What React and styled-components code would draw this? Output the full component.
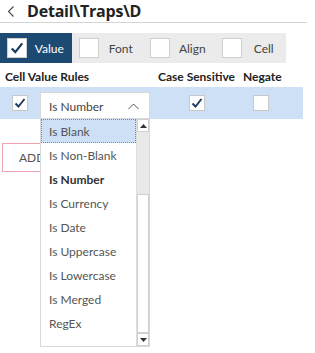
import React from 'react';
import styled, { createGlobalStyle } from 'styled-components';

const GlobalStyle = createGlobalStyle`
  html, body {
    margin: 0;
    padding: 0;
    background: #fff;
    font-family: 'Lato', 'Open Sans', sans-serif;
  }
`;

const tabs = [
  { label: 'Value', checked: true, active: true },
  { label: 'Font' },
  { label: 'Align' },
  { label: 'Cell' },
];

const options = [
  'Is Blank',
  'Is Non-Blank',
  'Is Number',
  'Is Currency',
  'Is Date',
  'Is Uppercase',
  'Is Lowercase',
  'Is Merged',
  'RegEx',
];

const Check = ({ size = 12 }) => (
  <svg width={size} height={size} viewBox="0 0 12 12">
    <path d="M1.5 6.5 L4.5 9.5 L10.5 2" fill="none" stroke="#1c3a63" strokeWidth="1.9" />
  </svg>
);

const App = () => {
  return (
    <Page>
      <GlobalStyle />
      <Header>
        <BackIcon width="8" height="11" viewBox="0 0 8 11">
          <path d="M6.5 0.5 L1.5 5.5 L6.5 10.5" fill="none" stroke="#444" strokeWidth="1.1" />
        </BackIcon>
        <Title>Detail\Traps\D</Title>
      </Header>

      <TabBar>
        {tabs.map((t) => (
          <Tab key={t.label} active={t.active}>
            <TabBox>{t.checked && <Check size={14} />}</TabBox>
            <TabLabel>{t.label}</TabLabel>
          </Tab>
        ))}
      </TabBar>

      <TableHead>
        <HeadCell>Cell Value Rules</HeadCell>
        <HeadCell>Case Sensitive</HeadCell>
        <HeadCell>Negate</HeadCell>
      </TableHead>

      <RuleRow>
        <CenterCell>
          <RowBox>
            <Check />
          </RowBox>
        </CenterCell>
        <SelectWrap>
          <Select>
            <span>Is Number</span>
            <svg width="11" height="7" viewBox="0 0 11 7">
              <path d="M0.5 6 L5.5 1 L10.5 6" fill="none" stroke="#555" strokeWidth="1" />
            </svg>
          </Select>
          <DropList>
            <Options>
              {options.map((o, i) => (
                <Option key={o} selected={i === 0} bold={o === 'Is Number'}>
                  {o}
                </Option>
              ))}
            </Options>
            <ScrollBar>
              <ScrollBtn>
                <svg width="7" height="4" viewBox="0 0 7 4">
                  <path d="M0 4 L3.5 0 L7 4 Z" fill="#333" />
                </svg>
              </ScrollBtn>
              <ScrollThumbArea />
              <ScrollTrack />
              <ScrollBtn>
                <svg width="7" height="4" viewBox="0 0 7 4">
                  <path d="M0 0 L3.5 4 L7 0 Z" fill="#333" />
                </svg>
              </ScrollBtn>
            </ScrollBar>
          </DropList>
        </SelectWrap>
        <CenterCell>
          <RowBox>
            <Check />
          </RowBox>
        </CenterCell>
        <CenterCell>
          <RowBox />
        </CenterCell>
      </RuleRow>

      <AddButton>ADD</AddButton>
    </Page>
  );
};

export default App;

const Page = styled.div`
  width: 315px;
  height: 353px;
  overflow: hidden;
  position: relative;
`;

const Header = styled.div`
  display: flex;
  align-items: center;
  width: 307px;
  height: 23px;
  border-bottom: 1px solid #d4d4d4;
  box-sizing: border-box;
  padding-left: 7px;
`;

const BackIcon = styled.svg`
  margin-right: 12px;
`;

const Title = styled.div`
  font-family: 'Open Sans', sans-serif;
  font-size: 16px;
  font-weight: 700;
  color: #222;
  letter-spacing: -0.2px;
`;

const TabBar = styled.div`
  display: flex;
  width: 286px;
  height: 30px;
  margin-top: 10px;
  background: #ebebeb;
`;

const Tab = styled.div`
  display: flex;
  align-items: center;
  width: 72px;
  padding-left: 7px;
  box-sizing: border-box;
  background: ${(p) => (p.active ? '#1d4a73' : '#ebebeb')};
  color: ${(p) => (p.active ? '#fff' : '#444')};
`;

const TabBox = styled.div`
  width: 20px;
  height: 20px;
  box-sizing: border-box;
  background: #fff;
  border: 1px solid #d0d0d0;
  display: flex;
  align-items: center;
  justify-content: center;
`;

const TabLabel = styled.div`
  flex: 1;
  text-align: center;
  font-size: 12px;
`;

const TableHead = styled.div`
  display: grid;
  grid-template-columns: 153px 85px 1fr;
  padding: 0 0 3px 5px;
  height: 24px;
  align-items: end;
  width: 303px;
  box-sizing: border-box;
`;

const HeadCell = styled.div`
  font-size: 12px;
  font-weight: 700;
  color: #222;
`;

const RuleRow = styled.div`
  display: grid;
  grid-template-columns: 40px 110px 94px 34px;
  align-items: center;
  width: 303px;
  height: 32px;
  background: #cde0f6;
  position: relative;
`;

const RowBox = styled.div`
  width: 16px;
  height: 16px;
  box-sizing: border-box;
  background: #fff;
  border: 1px solid #c8c8c8;
  display: flex;
  align-items: center;
  justify-content: center;
`;

const CenterCell = styled.div`
  display: flex;
  justify-content: center;
`;

const SelectWrap = styled.div`
  position: relative;
  align-self: end;
`;

const Select = styled.div`
  height: 27px;
  box-sizing: border-box;
  background: #fff;
  border: 1px solid #d8d8d8;
  border-bottom: none;
  display: flex;
  align-items: center;
  justify-content: space-between;
  padding: 0 10px 0 8px;
  font-size: 12px;
  color: #444;
`;

const DropList = styled.div`
  position: absolute;
  top: 26px;
  left: 0;
  width: 110px;
  height: 229px;
  box-sizing: border-box;
  background: #fff;
  border: 1px solid #d8d8d8;
  display: flex;
  z-index: 2;
`;

const Options = styled.div`
  flex: 1;
`;

const Option = styled.div`
  height: 24px;
  display: flex;
  align-items: center;
  padding-left: 7px;
  font-size: 12px;
  box-sizing: border-box;
  color: ${(p) => (p.bold ? '#333' : '#555')};
  font-weight: ${(p) => (p.bold ? 700 : 400)};
  background: ${(p) => (p.selected ? '#cde0f6' : 'transparent')};
  border: 1px dotted ${(p) => (p.selected ? '#7a8a9a' : 'transparent')};
`;

const ScrollBar = styled.div`
  width: 12px;
  display: flex;
  flex-direction: column;
  background: #e9e9e9;
  border-left: 1px solid #ddd;
`;

const ScrollBtn = styled.div`
  height: 13px;
  background: #fff;
  border: 1px solid #d0d0d0;
  box-sizing: border-box;
  display: flex;
  align-items: center;
  justify-content: center;
`;

const ScrollThumbArea = styled.div`
  height: 62px;
`;

const ScrollTrack = styled.div`
  flex: 1;
  background: #fff;
  border: 1px solid #d0d0d0;
`;

const AddButton = styled.div`
  width: 50px;
  height: 29px;
  margin: 24px 0 0 2px;
  box-sizing: border-box;
  border: 1px solid #f2a3b3;
  display: flex;
  align-items: center;
  padding-left: 16px;
  font-size: 12px;
  color: #555;
`;
